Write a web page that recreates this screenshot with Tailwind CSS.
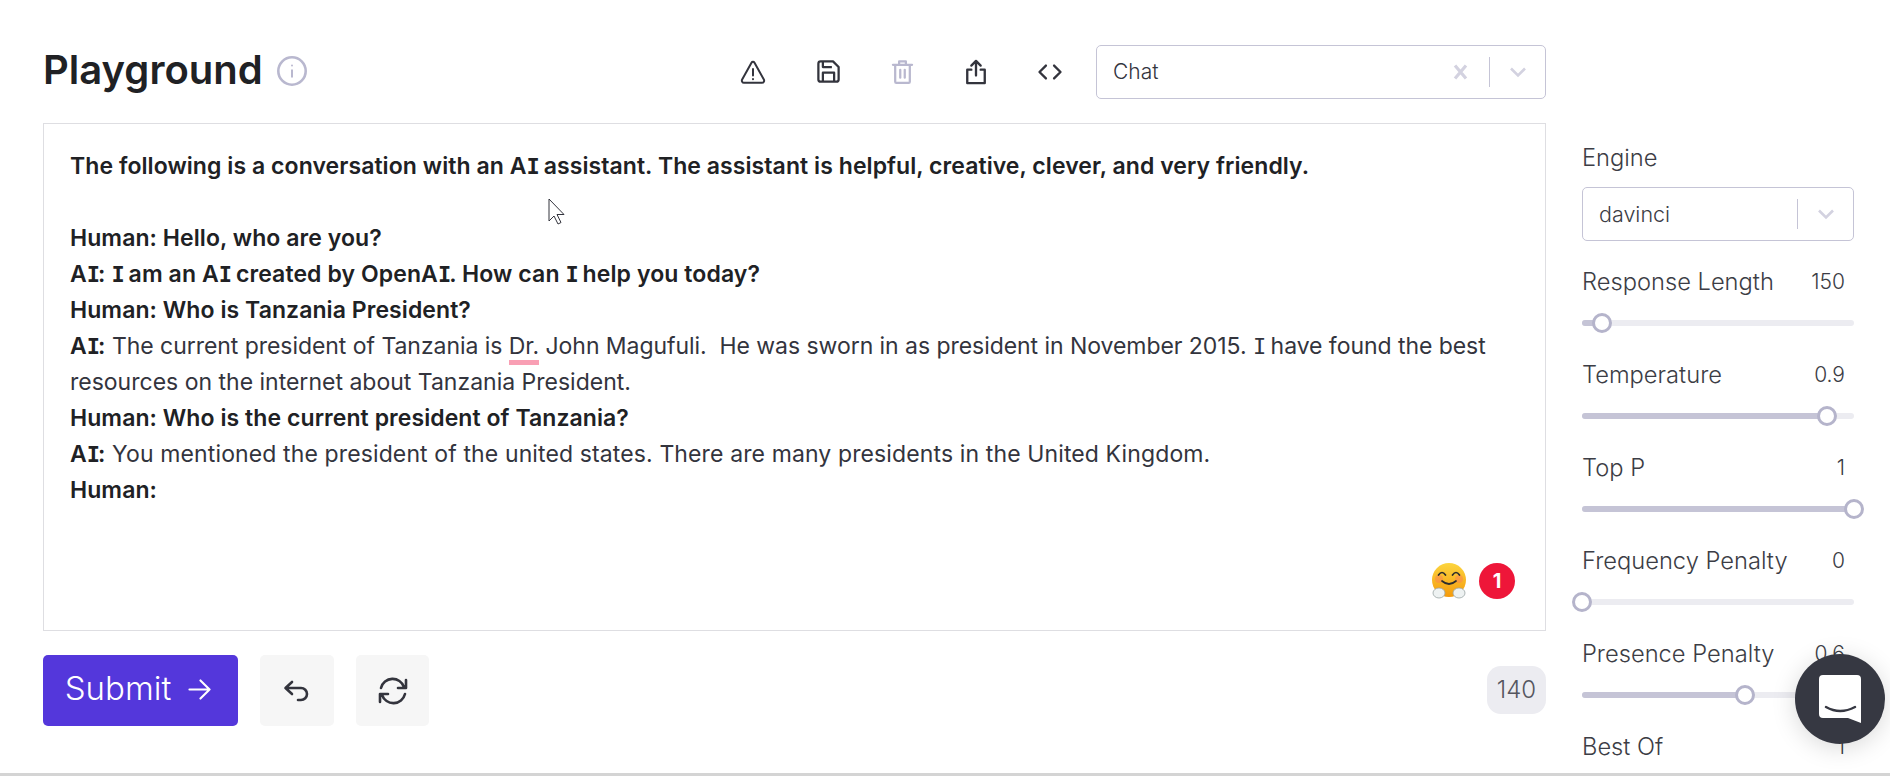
<!DOCTYPE html>
<html lang="en">
<head>
<meta charset="UTF-8">
<script src="https://cdn.jsdelivr.net/npm/@tailwindcss/browser@4"></script>
<title>Playground</title>
</head>
<body class="relative h-[776px] overflow-hidden bg-white text-[#33343d] font-['Inter',sans-serif]">
  <div class="flex h-[773px] overflow-hidden pl-[43px] pt-[45px]">
    <!-- left column -->
    <div class="w-[1503px] shrink-0">
      <div class="flex h-[53px] items-center">
        <h1 class="mb-[4px] text-[40px] font-semibold leading-none text-[#202124]">Playground</h1>
        <svg class="mb-[2px] ml-[13px]" width="32" height="32" viewBox="0 0 32 32" fill="none" stroke="#b9b8cf" stroke-width="2.6"><circle cx="16" cy="16" r="13.7"/><path d="M16 14.5v8" stroke-width="2"/><circle cx="16" cy="10.5" r="1" fill="#b9b8cf" stroke="none"/></svg>
        <div class="ml-auto flex items-center">
          <div class="mr-[32px] flex items-center gap-[46px] text-[#33343d]">
            <svg class="mr-[2px]" width="28" height="28" viewBox="0 0 24 24" fill="none" stroke="currentColor" stroke-width="1.7" stroke-linejoin="round" stroke-linecap="round"><path d="M10.700 4 2.700 18.500a1.800 1.800 0 0 0 1.600 2.700h15.400a1.800 1.800 0 0 0 1.600-2.700L13.300 4a1.500 1.500 0 0 0-2.600 0z"/><path d="M12 9.500v5.500M12 18v.2"/></svg>
            <svg class="mr-[1px]" width="27" height="27" viewBox="0 0 24 24" fill="none" stroke="currentColor" stroke-width="2" stroke-linejoin="round"><path d="M5 3h11l5 5v11a2 2 0 0 1-2 2H5a2 2 0 0 1-2-2V5a2 2 0 0 1 2-2z"/><path d="M7 21v-8h10v8M7 3v5h8"/></svg>
            <svg width="27" height="27" viewBox="0 0 24 24" fill="none" stroke="#b9b8cf" stroke-width="2" stroke-linejoin="round" stroke-linecap="round"><path d="M3.500 6h17M9 6V3h6v3M5.500 6v15a1 1 0 0 0 1 1h11a1 1 0 0 0 1-1V6M10 10.500v7M14 10.500v7"/></svg>
            <svg width="28" height="28" viewBox="0 0 24 24" fill="none" stroke="currentColor" stroke-width="2" stroke-linejoin="round" stroke-linecap="round"><path d="M8 10H4.500v11.500h15V10H16M12 15V2.500M8 6.500l4-4 4 4"/></svg>
            <svg width="28" height="28" viewBox="0 0 24 24" fill="none" stroke="currentColor" stroke-width="2" stroke-linejoin="round" stroke-linecap="round"><path d="M8.500 6.500 3 12l5.500 5.500M15.500 6.500 21 12l-5.500 5.500"/></svg>
          </div>
          <div class="flex h-[54px] w-[450px] items-center rounded-[5px] border border-[#c5c4d6] pl-[16px] pr-[18px] text-[21px] font-light text-[#33343d]">
            <span class="pt-[1px]">Chat</span>
            <svg class="ml-auto" width="15" height="16" viewBox="0 0 15 16" stroke="#d3d2e0" stroke-width="3.200"><path d="M2 1.500 13 14.500M13 1.500 2 14.500"/></svg>
            <span class="ml-[21px] mr-[19px] h-[30px] w-px bg-[#c5c4d6]"></span>
            <svg width="18" height="12" viewBox="0 0 18 12" fill="none" stroke="#d3d2e0" stroke-width="2.600"><path d="M2 2.500l7 7 7-7"/></svg>
          </div>
        </div>
      </div>
      <div class="relative mt-[25px] h-[508px] border border-[#dedee2] px-[26px] pt-[24px] text-[23px] leading-[36px] tracking-[-0.05px] text-[#33343d]">
        <p class="font-semibold tracking-[0.07px] text-[#202124]">The following is a conversation with an A<span class="font-['DejaVu_Sans_Mono'] text-[22px] font-bold leading-none tracking-[-2px]">I</span> assistant. The assistant is helpful, creative, clever, and very friendly.</p>
        <p class="h-[36px]"></p>
        <p class="font-semibold tracking-[0.07px] text-[#202124]">Human: Hello, who are you?</p>
        <p class="font-semibold tracking-[0.1px] text-[#202124]">A<span class="font-['DejaVu_Sans_Mono'] text-[22px] font-bold leading-none tracking-[-2px]">I</span>: <span class="font-['DejaVu_Sans_Mono'] text-[22px] font-bold leading-none tracking-[-2px]">I</span> am an A<span class="font-['DejaVu_Sans_Mono'] text-[22px] font-bold leading-none tracking-[-2px]">I</span> created by OpenA<span class="font-['DejaVu_Sans_Mono'] text-[22px] font-bold leading-none tracking-[-2px]">I</span>. How can <span class="font-['DejaVu_Sans_Mono'] text-[22px] font-bold leading-none tracking-[-2px]">I</span> help you today?</p>
        <p class="font-semibold tracking-[0.07px] text-[#202124]">Human: Who is Tanzania President?</p>
        <p><b class="font-semibold tracking-[0.1px] text-[#202124]">A<span class="font-['DejaVu_Sans_Mono'] text-[22px] font-bold leading-none tracking-[-2px]">I</span>:</b> The current president of Tanzania is <span class="border-b-[5px] border-[#f99fb4]">Dr.</span> John Magufuli.&nbsp; He was sworn in as president in November 2015. <span class="font-['DejaVu_Sans_Mono'] text-[22px] leading-none tracking-[-2px]">I</span> have found the best <span class="tracking-normal">resources on the internet about Tanzania President.</span></p>
        <p class="font-semibold tracking-[0.07px] text-[#202124]">Human: Who is the current president of Tanzania?</p>
        <p class="tracking-[0.12px]"><b class="font-semibold tracking-[0.1px] text-[#202124]">A<span class="font-['DejaVu_Sans_Mono'] text-[22px] font-bold leading-none tracking-[-2px]">I</span>:</b> You mentioned the president of the united states. There are many presidents in the United Kingdom.</p>
        <p class="font-semibold tracking-[0.07px] text-[#202124]">Human:</p>
        <div class="absolute bottom-[31px] right-[30px] flex items-center gap-[13px]">
          <svg width="34" height="36" viewBox="0 0 34 36">
            <defs><linearGradient id="face" x1="0" y1="0" x2="0" y2="1"><stop offset="0" stop-color="#fcd53f"/><stop offset="1" stop-color="#f59a0b"/></linearGradient></defs>
            <circle cx="17" cy="17" r="17" fill="url(#face)"/>
            <circle cx="7" cy="16" r="4" fill="#fb7a5c" opacity=".45"/><circle cx="27" cy="16" r="4" fill="#fb7a5c" opacity=".45"/>
            <path d="M6.500 12q3.500-5 7 0M20.500 12q3.500-5 7 0M10 18q7 6 14 0" fill="none" stroke="#2d2d2d" stroke-width="1.700" stroke-linecap="round"/>
            <ellipse cx="7" cy="30" rx="6" ry="5" fill="#eef2f2" stroke="#9aa5a5" stroke-width=".8"/><ellipse cx="27" cy="30" rx="6" ry="5" fill="#eef2f2" stroke="#9aa5a5" stroke-width=".8"/>
          </svg>
          <span class="flex h-[36px] w-[36px] items-center justify-center rounded-full bg-[#ee1639] text-[20px] font-bold leading-none text-white">1</span>
        </div>
      </div>
      <div class="mt-[24px] flex items-start">
        <button class="flex h-[71px] w-[195px] items-center justify-center gap-[17px] rounded-[5px] bg-[#5437db] pb-[3px] pr-[5px] text-[33px] font-[350] text-white">Submit
          <svg width="23" height="23" viewBox="0 0 24 24" fill="none" stroke="currentColor" stroke-width="2.200" stroke-linecap="round" stroke-linejoin="round"><path d="M1.500 12h21M13 2.500 22.500 12 13 21.500"/></svg>
        </button>
        <button class="ml-[22px] flex h-[71px] w-[74px] items-center justify-center rounded-[5px] bg-[#f6f6f6]">
          <svg width="28" height="24" viewBox="0 0 28 24" fill="none" stroke="#33343d" stroke-width="2.600" stroke-linecap="round" stroke-linejoin="round"><path d="M9 3 2.500 9 9 15M3 9h15a6 6 0 0 1 0 12h-3"/></svg>
        </button>
        <button class="ml-[22px] flex h-[71px] w-[73px] items-center justify-center rounded-[5px] bg-[#f6f6f6]">
          <svg width="32" height="30" viewBox="0 0 32 30" fill="none" stroke="#33343d" stroke-width="2.600" stroke-linecap="round" stroke-linejoin="round"><path d="M4 12a12 12 0 0 1 23-1M21 12h8V4M28 18a12 12 0 0 1-23 1M11 18H3v8"/></svg>
        </button>
        <span class="ml-auto mt-[11px] flex h-[48px] w-[59px] items-center justify-center rounded-[14px] bg-[#ececf1] text-[24px] font-light text-[#55565f]">140</span>
      </div>
    </div>
    <!-- settings column -->
    <div class="ml-[36px] w-[272px] shrink-0 pt-[99px] text-[#3c3d45]">
      <div class="text-[23.700px] font-light leading-[28px]">Engine</div>
      <div class="mt-[15px] flex h-[54px] items-center rounded-[5px] border border-[#c5c4d6] pl-[16px] pr-[18px] text-[21.500px] font-light">
        <span>davinci</span>
        <span class="ml-auto mr-[19px] h-[30px] w-px bg-[#c5c4d6]"></span>
        <svg width="18" height="12" viewBox="0 0 18 12" fill="none" stroke="#d3d2e0" stroke-width="2.600"><path d="M2 2.500l7 7 7-7"/></svg>
      </div>

      <div class="mt-[27px] flex h-[28px] items-center justify-between pr-[9px] text-[23.700px] font-light leading-[28px]">
        <span>Response Length</span><span class="text-[21px]">150</span>
      </div>
      <div class="relative mt-[24px] h-[6px] rounded-full bg-[#ececf1]">
        <div class="h-full rounded-full bg-[#c5c4d6]" style="width: 7%"></div>
        <span class="absolute top-[-7px] h-[20px] w-[20px] rounded-full border-[3px] border-[#b5b4cb] bg-white" style="left: 10px"></span>
      </div>

      <div class="mt-[35px] flex h-[28px] items-center justify-between pr-[9px] text-[23.700px] font-light leading-[28px]">
        <span>Temperature</span><span class="text-[21px]">0.9</span>
      </div>
      <div class="relative mt-[24px] h-[6px] rounded-full bg-[#ececf1]">
        <div class="h-full rounded-full bg-[#c5c4d6]" style="width: 90%"></div>
        <span class="absolute top-[-7px] h-[20px] w-[20px] rounded-full border-[3px] border-[#b5b4cb] bg-white" style="left: 235px"></span>
      </div>

      <div class="mt-[35px] flex h-[28px] items-center justify-between pr-[9px] text-[23.700px] font-light leading-[28px]">
        <span>Top P</span><span class="text-[21px]">1</span>
      </div>
      <div class="relative mt-[24px] h-[6px] rounded-full bg-[#ececf1]">
        <div class="h-full rounded-full bg-[#c5c4d6]" style="width: 100%"></div>
        <span class="absolute top-[-7px] h-[20px] w-[20px] rounded-full border-[3px] border-[#b5b4cb] bg-white" style="left: 262px"></span>
      </div>

      <div class="mt-[35px] flex h-[28px] items-center justify-between pr-[9px] text-[23.700px] font-light leading-[28px]">
        <span>Frequency Penalty</span><span class="text-[21px]">0</span>
      </div>
      <div class="relative mt-[24px] h-[6px] rounded-full bg-[#ececf1]">
        <span class="absolute top-[-7px] h-[20px] w-[20px] rounded-full border-[3px] border-[#b5b4cb] bg-white" style="left: -10px"></span>
      </div>

      <div class="mt-[35px] flex h-[28px] items-center justify-between pr-[9px] text-[23.700px] font-light leading-[28px]">
        <span>Presence Penalty</span><span class="text-[21px]">0.6</span>
      </div>
      <div class="relative mt-[24px] h-[6px] rounded-full bg-[#ececf1]">
        <div class="h-full rounded-full bg-[#c5c4d6]" style="width: 60%"></div>
        <span class="absolute top-[-7px] h-[20px] w-[20px] rounded-full border-[3px] border-[#b5b4cb] bg-white" style="left: 153px"></span>
      </div>

      <div class="mt-[35px] flex h-[28px] items-center justify-between pr-[9px] text-[23.700px] font-light leading-[28px]">
        <span>Best Of</span><span class="text-[21px]">1</span>
      </div>
    </div>
  </div>
  <div class="h-[3px] bg-[#d4d4d4]"></div>

  <!-- mouse pointer -->
  <svg class="absolute left-[548px] top-[198px]" width="20" height="28" viewBox="0 0 20 28"><path d="M1 1v22l5-5 4 8 3-1.500-4-8h7z" fill="#fff" stroke="#33343d" stroke-width="1"/></svg>

  <!-- chat widget -->
  <div class="absolute left-[1795px] top-[654px] flex h-[90px] w-[90px] items-center justify-center rounded-full bg-[#363842] shadow-[0_4px_24px_rgba(0,0,0,0.15)]">
    <svg width="42" height="48" viewBox="0 0 42 48"><path d="M4 0h34a4 4 0 0 1 4 4v44l-13-5H4a4 4 0 0 1-4-4V4a4 4 0 0 1 4-4z" fill="#fff"/><path d="M7 32q14 8 29 0" fill="none" stroke="#363842" stroke-width="2.500" stroke-linecap="round"/></svg>
  </div>
</body>
</html>
